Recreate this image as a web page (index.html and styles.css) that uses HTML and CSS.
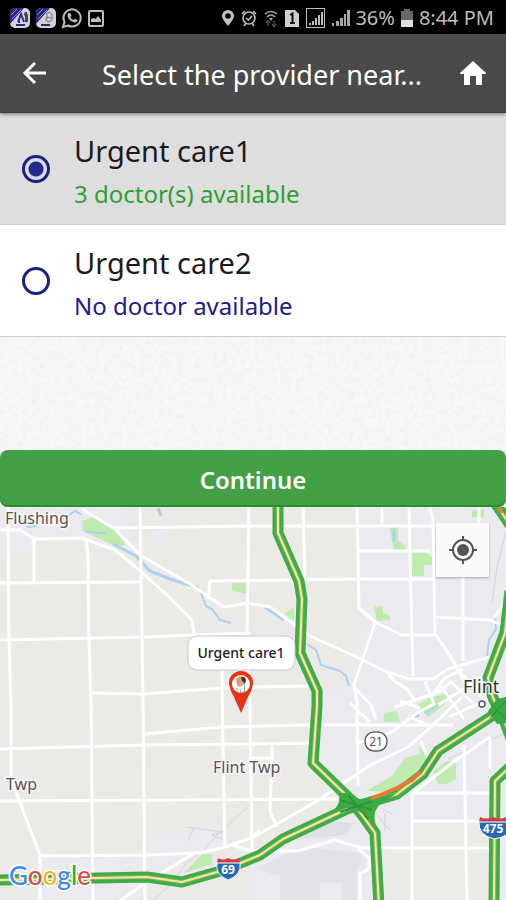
FILE: index.html
```html
<!DOCTYPE html>
<html lang="en">
<head>
<meta charset="utf-8">
<meta name="viewport" content="width=device-width, initial-scale=1">
<title>Select the provider near you</title>
<link rel="stylesheet" href="styles.css">
</head>
<body>
<div class="status">
  <div class="status-group notices">
    <svg width="22" height="22" viewBox="0 0 22 22"><rect x="1" y="1" width="20" height="20" rx="5" fill="#d4d4dc"/><path d="M1 14V6Q1 1 6 1H15L1 17Z" fill="#2a2a83"/><path d="M3 12L12 3M2 8L8 2" stroke="#8e8eb8"/><path d="M9 15L12 7L15 15M10 12V16" fill="none" stroke="#2a2a83" stroke-width="2"/><path d="M16 5Q14 8 16 9V15H19V8Q18 7 18 5Z" fill="#444455"/><path d="M7 18H16" stroke="#2a2a70" stroke-width="2"/></svg>
    <svg width="22" height="22" viewBox="0 0 22 22"><rect x="1" y="1" width="20" height="20" rx="5" fill="#d0d0d2"/><path d="M1 14V6Q1 1 6 1H15L1 17Z" fill="#2a2a83"/><path d="M3 12L12 3M2 8L8 2" stroke="#8e8eb8"/><path d="M11 7Q15 3 17 8Q18 14 14 15Q9 14 12 10L16 11M12 7V13" fill="none" stroke="#777" stroke-width="1"/><path d="M6 18H15" stroke="#2a2a70" stroke-width="2"/></svg>
    <svg width="22" height="22" viewBox="0 0 22 22"><path d="M2 20L3.500 15A8.600 8.600 0 1 1 7 18.500Z" fill="none" stroke="#bcbcbc" stroke-width="2"/><path d="M7.500 6L9.500 6L10.500 9L9.300 10.200Q10.500 12.300 12.500 13L14 11.700L16.500 13Q16 15.700 13.500 15.500Q7.500 14 6.500 8.500Q6.500 7 7.500 6Z" fill="#bcbcbc"/></svg>
    <svg width="18" height="22" viewBox="0 0 18 22"><rect x="2" y="4" width="14" height="15" rx="1" fill="none" stroke="#bcbcbc" stroke-width="2"/><path d="M4 15V12L7 11L8.500 12L11 9L14 13V15Z" fill="#bcbcbc"/></svg>
  </div>
  <div class="status-group">
    <svg width="14" height="22" viewBox="0 0 14 22"><path fill-rule="evenodd" d="M7 3A6 6 0 0 0 1 9Q1 12 7 19Q13 12 13 9A6 6 0 0 0 7 3ZM7 6.200A2.800 2.800 0 1 1 7 11.800A2.800 2.800 0 0 1 7 6.200Z" fill="#c2c2c2"/></svg>
    <svg width="18" height="22" viewBox="0 0 18 22"><g fill="none" stroke="#bcbcbc" stroke-width="1.600"><circle cx="9" cy="11" r="6"/><path d="M2 7L5 4M13 4L16 7M4 19L6 16M14 19L12 16M6 11L8.500 13L12 9"/></g></svg>
    <svg class="wifi" width="16" height="22" viewBox="0 0 16 22"><g fill="none" stroke="#a8a8a8" stroke-width="1.600"><path d="M2 7Q8 2 14 7M4 10Q8 6 12 10"/></g><path d="M6 11H10L8 14Z" fill="#a8a8a8"/><path d="M5 19V14M3 16L5 13L7 16M11 14V19M9 17L11 20L13 17" fill="none" stroke="#666"/></svg>
    <svg width="16" height="22" viewBox="0 0 16 22"><path d="M1 3H11L15 7V20H1Z" fill="#d0d0d0"/><path d="M6 8L8.500 6.500V16.500M6 16H11" fill="none" stroke="#111" stroke-width="2"/></svg>
    <svg class="sim" width="22" height="22" viewBox="0 0 22 22"><rect x="1.500" y="1.500" width="18" height="19" fill="none" stroke="#bcbcbc"/><path d="M4 18V16H6V18ZM7 18V14H9V18ZM10 18V11H12V18ZM13 18V8H15V18ZM16 18V5H18V18Z" fill="#bcbcbc"/></svg>
    <svg width="18" height="22" viewBox="0 0 18 22"><path d="M0 19V16H2V19ZM4 19V14H7V19ZM8 19V11H11V19ZM12 19V7H14V19ZM15 19V3H18V19Z" fill="#a8a8a8"/></svg>
    <span class="charge">36%</span>
    <svg width="14" height="22" viewBox="0 0 14 22"><path d="M4 2H10V4H13V13H1V4H4Z" fill="#686868"/><path d="M1 13H13V20H1Z" fill="#dedede"/></svg>
    <span>8:44 PM</span>
  </div>
</div>
<header class="bar">
  <button class="icon-btn" type="button" aria-label="Back"><svg width="26" height="26" viewBox="0 0 26 26"><path d="M24 13H3M13 3L3 13L13 23" fill="none" stroke="#fff" stroke-width="3"/></svg></button>
  <h1>Select the provider near...</h1>
  <a class="icon-btn" href="#home" aria-label="Home"><svg width="28" height="26" viewBox="0 0 28 26"><path d="M14 1L27 13V14H23V25H17V16H11V25H5V14H1V13Z" fill="#fff"/></svg></a>
</header>
<main>
  <form class="providers">
    <label class="provider"><input type="radio" name="provider" checked><span class="info"><span class="name">Urgent care1</span><span class="avail open">3 doctor(s) available</span></span></label>
    <label class="provider"><input type="radio" name="provider"><span class="info"><span class="name">Urgent care2</span><span class="avail">No doctor available</span></span></label>
    <div class="paper"><svg width="100%" height="100%" aria-hidden="true"><filter id="grain" x="0" y="0" width="100%" height="100%"><feTurbulence type="fractalNoise" baseFrequency=".22" numOctaves="3" seed="8"/><feColorMatrix values="0 0 0 0 .5  0 0 0 0 .5  0 0 0 0 .5  .25 0 0 0 -.1"/></filter><rect width="100%" height="100%" filter="url(#grain)"/></svg></div>
    <button class="continue" type="button">Continue</button>
  </form>
  <section class="map" aria-label="Map">
    <svg class="map-art" viewBox="0 506 506 394">
      <defs>
        <path id="hw-a" d="M278 500V532L299 580L302 598L300 652L317 690V705L313 762L348 796L363 815L375 832L379 905"/>
        <path id="hw-b" d="M-5 879L147 876L182 881L224 869L260 854L283 838L347 808L397 793L423 773L438 750L495 713L510 704"/>
        <path id="hw-c" d="M494 500L510 524M510 590L505 632L488 677L493 697L503 716L512 740M510 766L495 780L494 905"/>
      </defs>
      <path d="M0 500H506V905H0Z" fill="#eceae7"/>
      <g fill="#ebeaee">
        <path d="M0 500H122L142 557L115 546L86 540L34 539V552L0 555Z"/>
        <path d="M357 500H506V900H490V820H412V845H385V900H250V860L306 836L350 796L313 762V690L354 685L358 630L375 620L358 607Z"/>
        <path d="M147 834L220 828V848L147 872ZM40 856H145V900H40Z"/><path d="M150 528H166V550L150 540Z"/>
      </g>
      <path d="M412 820H464V900H412Z" fill="#edebe8"/>
      <path d="M255 868L300 846L364 852L357 870V900H342V882H320V900H280V875Z" fill="#e2e2e7"/>
      <path d="M300 838L328 820L354 822L346 834Z" fill="#dce2e3"/>
      <g fill="#c0ebb0">
        <path d="M82 520L93 516L113 527L126 544L117 546L83 530Z"/><path d="M232 582H247V593L232 590Z"/><path d="M284 613L294 606V620Z"/><path d="M389 526H398V540L405 544V548H394Z"/><path d="M412 551H426L432 556V564H424V575H412Z"/><path d="M374 606L383 605V612L390 615V619L377 620Z"/><path d="M472 509H484V516H472Z"/><path d="M417 704L429 697L450 692L444 704L428 716Z"/><path d="M384 712L397 710L400 721H384Z"/><path d="M366 790L392 775L405 757L420 753L418 745L427 755L422 770L394 791Z"/><path d="M433 770L447 760H456V778L446 783H438Z"/><path d="M184 872L202 853H212V863Z"/>
      </g>
      <g fill="none" stroke="#aad1f0" stroke-width="3">
        <path d="M113 543L136 555L150 570L170 578L199 587"/><path stroke-width="2" d="M69 514L75 510L82 514M27 526L37 525M86 531L106 532M200 590L206 605L212 608L220 619L231 622M307 643L316 649L321 664L340 670L346 675L349 685M495 617L496 628L489 639L487 655M440 703L425 712"/><path d="M265 606L284 619M394 528V541M410 717L419 714M158 507L161 515"/>
      </g>
      <g fill="none" stroke="#d3d4dc" stroke-width="1">
        <path d="M250 804L217 834L202 851L186 862L173 882L152 900M186 826L223 831L212 834L222 838M194 826L188 840M506 530L497 566L492 602M448 758L506 732M375 812L390 829M382 807L393 814M385 812V830"/>
      </g>
      <g class="roads">
        <path d="M8 505L9 640L11 700V777L19 799L40 854V900M34 538V580M86 539L88 555L89 640L91 700L93 900M140 505L143 700L145 900M249 505L247 632L250 700L252 850M222 670L223 750L225 846M303 505L305 580M357 505L359 607L375 621L402 634H436L450 654L465 682M382 505V524M409 505L411 600L413 675M430 506L433 519L435 634M463 575V660M479 506V530"/>
        <path d="M0 529L20 529L34 538L82 537L115 549L137 567L167 594L192 619L194 633M82 508L115 528L140 554L190 583L224 606L248 602L270 606L310 635L359 657L385 670L409 678H433L448 668L490 656M115 527L250 525H479M0 582L143 581M208 598L210 580L357 578H435M0 639L143 636L194 634L250 632M0 748L143 744L250 743L313 742M91 692L143 693L223 687L250 686L313 685M143 733L223 726L300 724H440M0 800L180 799L338 798M39 855L147 854L200 852L225 846L250 837"/>
        <path d="M120 900L145 882L193 853M233 844L250 850M250 838L282 820L317 800L372 763L408 746L433 724L462 696M250 835L260 830M272 744V757H252M272 757L270 810L277 826M375 622L354 684L357 700L358 785M359 550H430M435 616L490 619L506 626M436 634L459 669M386 670L393 679L407 688L416 701M425 680L434 703L417 712L392 731L358 742M354 686L371 704L376 718M350 702L370 721M395 706L440 690L452 680M400 700L420 707M421 740L430 762M410 716L428 724H454M430 697L445 677L463 668M450 680L473 702M440 684L464 718M460 670L485 700M438 704L482 677M449 716L490 697"/>
        <path d="M250 850L298 850L334 839L363 847H490M357 847L369 857V868L360 873V900M412 793V900M412 820H490M412 792H490M464 744L467 900M490 736V768M412 793L452 762L490 736M506 600L494 617"/>
      </g>
      <g class="highways">
        <g class="green"><use href="#hw-a"/><use href="#hw-b"/><use href="#hw-c"/></g>
        <g class="edge"><use href="#hw-a"/><use href="#hw-b"/><use href="#hw-c"/></g>
        <g class="center"><use href="#hw-a"/><use href="#hw-b"/><use href="#hw-c"/></g>
        <path d="M338 792Q343 802 329 814L346 807L368 813L376 824Q371 810 382 802L397 792L373 798H359L351 792Z" fill="#3aac43"/>
        <path d="M340 799L372 809M340 811L372 800M348 794L368 818" fill="none" stroke="#2f953c" stroke-width="2"/>
        <path d="M488 710L497 698L506 696V722L497 723Z" fill="#38a944"/>
        <path d="M490 717L506 700M492 704L506 718" fill="none" stroke="#288b37"/>
        <path d="M371 798L397 787L412 779L420 771" fill="none" stroke="#e67b35" stroke-width="4"/>
        <path d="M497 505L502 512" stroke="#e67b35" stroke-width="3"/>
      </g>
      <g class="labels">
        <text x="5" y="523">Flushing</text><text x="213" y="772">Flint Twp</text><text x="6" y="789">Twp</text><text class="city" x="463" y="692">Flint</text>
      </g>
      <circle cx="482" cy="703" r="3" fill="#fff" stroke="#555" stroke-width="1.500"/>
      <rect x="365" y="731" width="22" height="19" rx="9" fill="#fff" stroke="#666" stroke-width="1.500"/>
      <text class="route" x="376" y="745">21</text>
      <g id="shield69"><path d="M218 857Q223 860 228 857Q234 860 239 857L240 862H217Z" fill="#cf3d43"/><path d="M217 862H240Q242 874 228 879Q215 874 217 862Z" fill="#2868b5" stroke="#fff"/></g>
      <text class="shield" x="228" y="873">69</text>
      <path d="M480 816Q486 819 493 816Q500 819 506 816V821H479Z" fill="#cf3d43"/><path d="M479 821H508V833Q502 837 494 838Q478 834 479 821Z" fill="#2868b5" stroke="#fff"/>
      <text class="shield" x="493" y="832">475</text>
      <text class="google" x="9" y="884"><tspan fill="#4285f4">G</tspan><tspan fill="#dd4b3e">o</tspan><tspan fill="#f2b51d">o</tspan><tspan fill="#4285f4">g</tspan><tspan fill="#32a853">l</tspan><tspan fill="#dd4b3e">e</tspan></text>
      <rect x="188" y="635" width="107" height="34" rx="9" fill="#fff" stroke="#c9c9c9"/>
      <text class="callout" x="241" y="657">Urgent care1</text>
      <path d="M241 670A12 12 0 0 0 229 683Q230 690 234 696L241 712L248 696Q252 690 253 683A12 12 0 0 0 241 670Z" fill="#e83213"/>
      <circle cx="241" cy="683" r="9" fill="#fff"/>
      <path d="M236 678Q239 674 242 676L243 682L240 686Q236 685 236 678Z" fill="#dc9f7e"/><path d="M241 676Q245 675 246 679L245 683L242 680Z" fill="#49302c"/><path d="M237 687V691M241 685L244 682L245 690L241 692L240 688" fill="none" stroke="#929ba4"/>
    </svg>
    <button class="locate" type="button" aria-label="My location"><svg width="30" height="30" viewBox="0 0 30 30"><circle cx="15" cy="15" r="10" fill="none" stroke="#555" stroke-width="2"/><circle cx="15" cy="15" r="6" fill="#555"/><path d="M15 1V6M15 24V29M1 15H6M24 15H29" stroke="#555" stroke-width="2"/></svg></button>
  </section>
</main>
</body>
</html>
```
FILE: styles.css
```css
* { box-sizing: border-box; }
body { margin: 0; background: #f3f3f3; font-family: "Noto Sans", "Open Sans", sans-serif; color: #1c1c1c; }
svg { display: block; flex: none; }
.status { display: flex; justify-content: space-between; align-items: center; height: 34px; padding: 2px 12px 0 9px; background: #000; color: #bcbcbc; font-size: 20px; line-height: 24px; }
.status-group { display: flex; align-items: center; gap: 4px; white-space: nowrap; }
.status-group + .status-group { gap: 5px; }
.bar { position: relative; z-index: 1; display: flex; align-items: center; height: 79px; padding: 0 14px 0 16px; background: #4a4a4a; border-bottom: 1px solid #383838; box-shadow: 0 1px 4px rgba(0, 0, 0, .5); }
.bar h1 { flex: 1; margin: 0 0 0 48px; padding-top: 3px; overflow: hidden; color: #fff; font-size: 27px; font-weight: 400; line-height: 40px; white-space: nowrap; }
.icon-btn { display: grid; place-items: center; flex: none; width: 38px; height: 48px; padding: 0; border: 0; background: none; }
.provider { display: flex; align-items: center; gap: 24px; height: 112px; padding: 0 22px; background: #fff; border-bottom: 1px solid #d2d2d2; }
.provider:has(input:checked) { background: #dedede; }
.provider input { flex: none; appearance: none; width: 28px; height: 28px; margin: 0; border: 3px solid #1b2086; border-radius: 50%; }
.provider input:checked { background: radial-gradient(circle, #202b8c 7px, transparent 8px); }
.info { display: flex; flex-direction: column; gap: 6px; padding-top: 4px; }
.name { font-size: 29px; line-height: 40px; }
.avail { color: #1b2086; font-size: 24px; line-height: 34px; }
.open { color: #2da035; }
.paper { height: 113px; background: #f7f7f7; }
.continue { display: block; width: 100%; height: 57px; padding: 3px 0 0; border: 0; border-radius: 8px; background: #43a047; color: #fff; font: 600 24px/36px "Noto Sans", sans-serif; box-shadow: inset 0 -2px #25912c; }
.map { position: relative; }
.map-art { width: 100%; height: auto; }
.locate { position: absolute; top: 16px; right: 17px; display: grid; place-items: center; width: 53px; height: 54px; padding: 0; border: 0; background: #fafafa; box-shadow: 0 1px 2px rgba(0, 0, 0, .3); }
.roads { fill: none; stroke: #fff; stroke-width: 3; stroke-linejoin: round; }
.highways { stroke-linejoin: round; }
.green { fill: none; stroke: #3fac47; stroke-width: 11; }
.edge { fill: none; stroke: #82b460; stroke-width: 4; }
.center { fill: none; stroke: #f6e6a2; stroke-width: 2; }
.labels { fill: #555; stroke: #f5f5f5; stroke-width: 3; paint-order: stroke; font-size: 16px; }
.city { fill: #333; font-size: 18px; }
.route { fill: #555; font-size: 12px; text-anchor: middle; }
.shield { fill: #fff; font-size: 12px; font-weight: 700; text-anchor: middle; }
.google { font-family: Lato, "Noto Sans", sans-serif; font-size: 26px; font-weight: 500; stroke: #fff; stroke-width: 3; paint-order: stroke; }
.callout { fill: #222; font-size: 14px; font-weight: 500; text-anchor: middle; }
```
